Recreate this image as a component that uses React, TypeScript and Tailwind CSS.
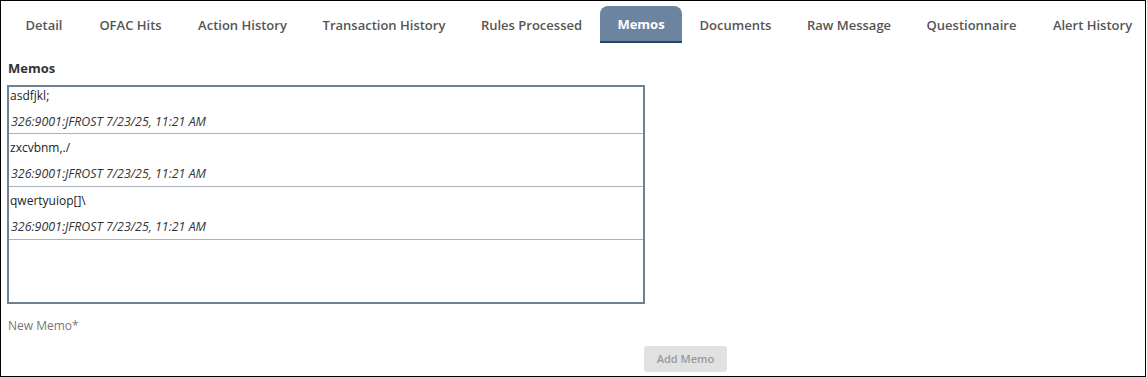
import React from "react";

const tabs: { label: string; w: string; active?: boolean }[] = [
  { label: "Detail", w: "w-[74px]" },
  { label: "OFAC Hits", w: "w-[99px]" },
  { label: "Action History", w: "w-[125px]" },
  { label: "Transaction History", w: "w-[158px]" },
  { label: "Rules Processed", w: "w-[137px]" },
  { label: "Memos", w: "w-[82px]", active: true },
  { label: "Documents", w: "w-[107px]" },
  { label: "Raw Message", w: "w-[120px]" },
  { label: "Questionnaire", w: "w-[125px]" },
  { label: "Alert History", w: "w-[117px]" },
];

const memos = [
  { text: "asdfjkl;", meta: "326:9001:JFROST 7/23/25, 11:21 AM" },
  { text: "zxcvbnm,./", meta: "326:9001:JFROST 7/23/25, 11:21 AM" },
  { text: "qwertyuiop[]\\", meta: "326:9001:JFROST 7/23/25, 11:21 AM" },
];

export default function App() {
  return (
    <div
      className="w-[1146px] h-[377px] border border-black bg-white overflow-hidden flex flex-col"
      style={{ fontFamily: '"Open Sans", "Noto Sans", sans-serif' }}
    >
      <div className="flex pl-[6px] pt-[5px] shrink-0">
        {tabs.map((t) =>
          t.active ? (
            <div
              key={t.label}
              className={`${t.w} shrink-0 h-[37px] flex items-center justify-center pt-[3px] rounded-t-[8px] bg-[#6d84a1] border-b-2 border-[#2c4566] text-white font-bold text-[13px]`}
            >
              {t.label}
            </div>
          ) : (
            <div
              key={t.label}
              className={`${t.w} shrink-0 h-[37px] flex items-center justify-center pt-[3px] text-[#555] font-semibold text-[13px] whitespace-nowrap`}
            >
              {t.label}
            </div>
          )
        )}
      </div>
      <div className="pl-[6px] pt-[16px]">
        <div className="text-[13px] font-bold text-[#333] leading-[18px] pl-[1px]">Memos</div>
        <div className="mt-[8px] w-[638px] h-[219px] border-2 border-[#6e8192] flex flex-col">
          {memos.map((m, i) => (
            <div
              key={i}
              className={`border-b border-[#a9b3bd] px-[1px] shrink-0 ${i === 0 ? "pt-0 pb-[2px]" : "pt-[5px] pb-[3px]"}`}
            >
              <div className="text-[12px] text-[#222] leading-[18px]">{m.text}</div>
              <div className="text-[12.4px] italic text-[#333] leading-[18px] mt-[8px] pl-[1px]">{m.meta}</div>
            </div>
          ))}
        </div>
        <div className="mt-[14px] text-[12px] text-[#777] leading-[16px] pl-[1px]">New Memo*</div>
        <div className="mt-[11px] ml-[637px]">
          <button className="w-[83px] h-[26px] rounded-[3px] bg-[#e1e1e1] text-[#9a9a9a] text-[11px] font-semibold">
            Add Memo
          </button>
        </div>
      </div>
    </div>
  );
}
